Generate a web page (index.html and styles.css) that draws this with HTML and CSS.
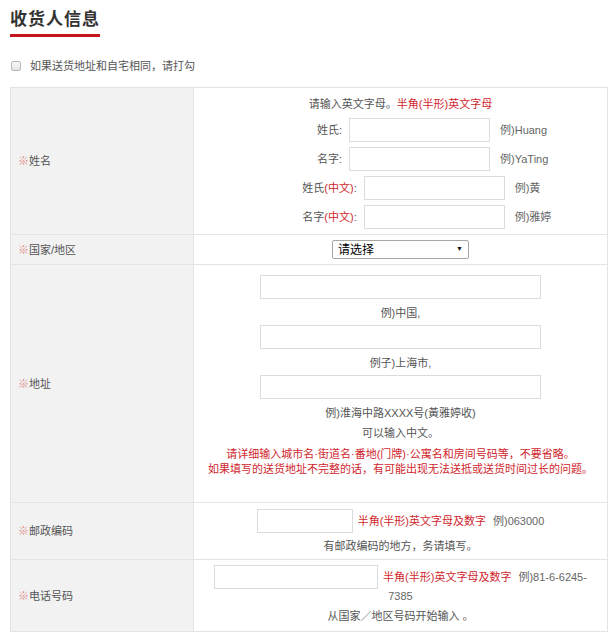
FILE: index.html
```html
<!DOCTYPE html>
<html lang="zh-CN">
<head>
    <meta charset="UTF-8">
    <link rel="stylesheet" href="styles.css">
</head>
<body>
    <div class="title-wrap">
        <h2 class="title">收货人信息</h2>
    </div>

    <label class="same-addr">
        <input type="checkbox">
        <span>如果送货地址和自宅相同，请打勾</span>
    </label>

    <table class="form-table">
        <tr>
            <th><span class="req">※</span>姓名</th>
            <td class="name-cell">
                <div class="hint">请输入英文字母。<span class="red">半角(半形)英文字母</span></div>
                <div class="name-row">
                    <span class="lbl">姓氏:</span>
                    <input type="text" class="w140">
                    <span class="ex">例)Huang</span>
                </div>
                <div class="name-row">
                    <span class="lbl">名字:</span>
                    <input type="text" class="w140">
                    <span class="ex">例)YaTing</span>
                </div>
                <div class="name-row">
                    <span class="lbl">姓氏<span class="red">(中文)</span>:</span>
                    <input type="text" class="w140">
                    <span class="ex">例)黄</span>
                </div>
                <div class="name-row">
                    <span class="lbl">名字<span class="red">(中文)</span>:</span>
                    <input type="text" class="w140">
                    <span class="ex">例)雅婷</span>
                </div>
            </td>
        </tr>
        <tr>
            <th><span class="req">※</span>国家/地区</th>
            <td class="country-cell">
                <div class="select-wrap">
                    <select>
                        <option>请选择</option>
                    </select>
                </div>
            </td>
        </tr>
        <tr>
            <th><span class="req">※</span>地址</th>
            <td class="addr-cell">
                <input type="text" class="w280">
                <p class="note">例)中国,</p>
                <input type="text" class="w280">
                <p class="note">例子)上海市,</p>
                <input type="text" class="w280">
                <p class="note last">例)淮海中路XXXX号(黃雅婷收)</p>
                <p class="note sub">可以输入中文。</p>
                <p class="warn">请详细输入城市名·街道名·番地(门牌)·公寓名和房间号码等，不要省略。<br>如果填写的送货地址不完整的话，有可能出现无法送抵或送货时间过长的问题。</p>
            </td>
        </tr>
        <tr>
            <th><span class="req">※</span>邮政编码</th>
            <td class="zip-cell">
                <div class="inline-row">
                    <input type="text" class="w96">
                    <span class="red">半角(半形)英文字母及数字</span>
                    <span class="ex2">例)063000</span>
                </div>
                <p class="note">有邮政编码的地方，务请填写。</p>
            </td>
        </tr>
        <tr>
            <th><span class="req">※</span>电话号码</th>
            <td class="tel-cell">
                <div class="inline-row">
                    <input type="text" class="w164">
                    <span class="red">半角(半形)英文字母及数字</span>
                    <span class="ex2">例)81-6-6245-</span>
                </div>
                <div class="wrap-line">7385</div>
                <p class="note">从国家／地区号码开始输入 。</p>
            </td>
        </tr>
    </table>
</body>
</html>
```

FILE: styles.css
```css
body {
    margin: 0;
    padding: 10px;
    font-family: "Liberation Sans", "Noto Sans CJK SC", sans-serif;
    font-size: 11px;
    color: #555;
}
.title-wrap {
    height: 27px;
}
.title {
    display: inline-block;
    margin: 0;
    font-size: 17px;
    letter-spacing: 1px;
    line-height: 20px;
    padding-bottom: 4px;
    border-bottom: 3px solid #c4161c;
    color: #333;
    font-weight: bold;
}
.same-addr {
    display: flex;
    align-items: center;
    margin-top: 20px;
    line-height: 18px;
}
.same-addr input {
    appearance: none;
    width: 10px;
    height: 10px;
    margin: 0 9px 0 1px;
    border: 1px solid #b8b8b8;
    border-radius: 2px;
    background: linear-gradient(#fafafa, #e4e4e4);
}
.form-table {
    width: 598px;
    margin-top: 12px;
    border-collapse: collapse;
}
.form-table th {
    width: 168px;
    padding: 0 7px;
    background-color: #f2f2f2;
    border: 1px solid #e4e4e4;
    text-align: left;
    font-weight: normal;
    vertical-align: middle;
    line-height: 18px;
}
.form-table td {
    border: 1px solid #e4e4e4;
    padding: 0 10px;
    text-align: center;
    vertical-align: top;
    line-height: 18px;
}
.req {
    color: #e08a8a;
}
.red {
    color: #d0262d;
}
input[type="text"] {
    height: 24px;
    box-sizing: border-box;
    padding: 2px 4px;
    border: 1px solid #dcdcdc;
    font: inherit;
    outline: none;
}
.w140 { width: 141px; }
.w280 { width: 281px; }
.w96 { width: 96px; }
.w164 { width: 164px; }

/* 姓名 */
.name-cell {
    padding-top: 7px !important;
    padding-bottom: 5px !important;
}
.name-row {
    display: flex;
    justify-content: center;
    align-items: center;
    height: 24px;
    margin-top: 5px;
    padding-left: 16px;
}
.name-row .lbl {
    margin-right: 7px;
    white-space: nowrap;
}
.name-row .ex {
    width: 0;
    margin-left: 10px;
    white-space: nowrap;
    text-align: left;
    color: #666;
}

/* 国家 */
.country-cell {
    padding-top: 5px !important;
    padding-bottom: 5px !important;
}
.select-wrap {
    position: relative;
    width: 137px;
    height: 19px;
    margin: 0 auto;
}
.select-wrap select {
    appearance: none;
    width: 100%;
    height: 100%;
    padding: 0 5px;
    border: 1px solid #a6a6a6;
    border-radius: 2px;
    background: #fff;
    font-family: inherit;
    font-size: 12px;
    color: #000;
}
.select-wrap::after {
    content: "▼";
    position: absolute;
    right: 6px;
    top: 5px;
    font-size: 7px;
    line-height: 8px;
    color: #111;
    pointer-events: none;
}

/* 地址 */
.addr-cell {
    padding-top: 10px !important;
    padding-bottom: 25px !important;
}
.addr-cell input {
    display: block;
    margin: 0 auto;
}
.note {
    margin: 5px 0 3px;
    color: #555;
}
.note.last {
    margin-bottom: 0;
}
.note.sub {
    margin-top: 2px;
}
.warn {
    margin: 5px 0 0;
    line-height: 15px;
    color: #d0262d;
    white-space: nowrap;
}

/* 邮编 / 电话 */
.zip-cell {
    padding-top: 6px !important;
    padding-bottom: 4px !important;
}
.tel-cell {
    padding-top: 5px !important;
    padding-bottom: 6px !important;
}
.inline-row {
    display: flex;
    justify-content: center;
    align-items: center;
    height: 24px;
    white-space: nowrap;
}
.inline-row .red {
    margin-left: 5px;
}
.inline-row .ex2 {
    margin-left: 7px;
    color: #666;
}
.zip-cell .note {
    margin: 4px 0 0;
}
.wrap-line {
    line-height: 15px;
    color: #666;
}
.tel-cell .note {
    margin: 3px 0 0;
}
```
